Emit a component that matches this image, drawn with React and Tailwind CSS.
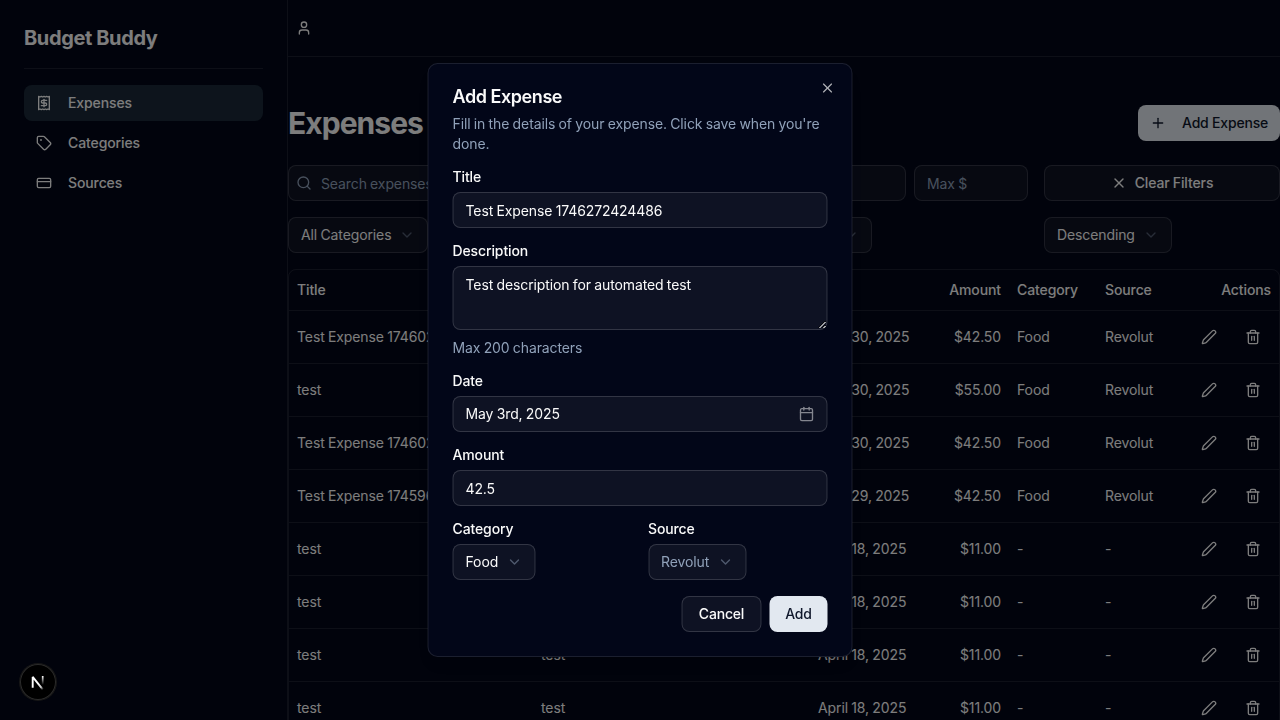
import React from "react";
import {
  Receipt,
  Tag,
  CreditCard,
  User,
  Plus,
  Search,
  X,
  ChevronDown,
  Pen,
  Trash2,
  Calendar,
} from "lucide-react";

const NAV = [
  { label: "Expenses", icon: Receipt, active: true },
  { label: "Categories", icon: Tag },
  { label: "Sources", icon: CreditCard },
];

const EXPENSES = [
  ["Test Expense 1746029841120", "Test expense", "April 30, 2025", "$42.50", "Food", "Revolut"],
  ["test", "test", "April 30, 2025", "$55.00", "Food", "Revolut"],
  ["Test Expense 1746027733410", "Test expense", "April 30, 2025", "$42.50", "Food", "Revolut"],
  ["Test Expense 1745964120873", "Test expense", "April 29, 2025", "$42.50", "Food", "Revolut"],
  ["test", "test", "April 18, 2025", "$11.00", "-", "-"],
  ["test", "test", "April 18, 2025", "$11.00", "-", "-"],
  ["test", "test", "April 18, 2025", "$11.00", "-", "-"],
  ["test", "test", "April 18, 2025", "$11.00", "-", "-"],
];

const TEXT = "text-sm tracking-[-0.11px] [word-spacing:-0.5px]";

const FIELD =
  TEXT +
  " h-9 w-full min-w-0 rounded-[8px] border border-white/15 bg-white/[0.05] px-3 py-1 outline-none placeholder:text-[#90a1b9]";

function Select({ children, muted }) {
  return (
    <button
      className={
        TEXT +
        " flex h-9 w-fit items-center justify-between gap-2 rounded-[8px] border border-white/15 bg-white/[0.05] px-3 py-2 whitespace-nowrap " +
        (muted ? "text-[#90a1b9]" : "")
      }
    >
      {children}
      <ChevronDown className="size-4 text-[#90a1b9] opacity-50" />
    </button>
  );
}

function Sidebar() {
  return (
    <aside className="w-72 shrink-0 border-r border-white/10 p-6">
      <div className="border-b border-white/10 pb-4">
        <h2 className="text-xl leading-7 font-bold tracking-[-0.38px]">Budget Buddy</h2>
      </div>
      <nav className="flex flex-col gap-1 pt-4">
        {NAV.map(({ label, icon: Icon, active }) => (
          <button
            key={label}
            className={
              TEXT +
              " flex h-9 items-center gap-4 rounded-[8px] px-3 font-medium " +
              (active ? "bg-[#1a2938]" : "")
            }
          >
            <Icon className="size-4" />
            {label}
          </button>
        ))}
      </nav>
    </aside>
  );
}

function Filters() {
  return (
    <div className="grid grid-cols-4 gap-4">
      <div className="grid grid-cols-1 grid-rows-1 items-center">
        <input className={FIELD + " col-start-1 row-start-1 pl-8"} placeholder="Search expenses..." />
        <Search className="pointer-events-none col-start-1 row-start-1 ml-2 size-4 text-[#90a1b9]" />
      </div>
      <button className={FIELD + " text-left"}>Pick a date range</button>
      <div className="flex gap-2">
        <input className={FIELD} placeholder="Min $" />
        <input className={FIELD} placeholder="Max $" />
      </div>
      <button
        className={
          TEXT +
          " flex h-9 items-center justify-center gap-2 rounded-[8px] border border-white/15 bg-white/[0.05] font-medium"
        }
      >
        <X className="size-4" />
        Clear Filters
      </button>
      <Select>All Categories</Select>
      <Select>All Sources</Select>
      <Select>Date</Select>
      <Select>Descending</Select>
    </div>
  );
}

function ExpenseTable() {
  return (
    <div className="rounded-[8px] border border-white/10">
      <table className={TEXT + " w-full table-fixed"}>
        <colgroup>
          <col className="w-[244px]" />
          <col className="w-[277px]" />
          <col className="w-[120px]" />
          <col className="w-[79px]" />
          <col className="w-[88px]" />
          <col className="w-[76px]" />
          <col />
        </colgroup>
        <thead>
          <tr className="border-b border-white/10 text-left [&>th]:h-10 [&>th]:px-2 [&>th]:font-medium">
            <th>Title</th>
            <th>Description</th>
            <th>Date</th>
            <th className="text-right">Amount</th>
            <th>Category</th>
            <th>Source</th>
            <th className="text-right">Actions</th>
          </tr>
        </thead>
        <tbody>
          {EXPENSES.map((row, i) => (
            <tr key={i} className="border-b border-white/10 whitespace-nowrap [&>td]:p-2">
              {row.map((cell, j) => (
                <td key={j} className={j === 3 ? "text-right" : ""}>
                  {cell}
                </td>
              ))}
              <td>
                <div className="flex justify-end gap-2">
                  <button className="grid size-9 place-items-center">
                    <Pen className="size-4" />
                  </button>
                  <button className="grid size-9 place-items-center">
                    <Trash2 className="size-4" />
                  </button>
                </div>
              </td>
            </tr>
          ))}
        </tbody>
      </table>
    </div>
  );
}

function Field({ label, children }) {
  return (
    <div className="grid content-start gap-2">
      <label className="text-sm leading-none font-medium tracking-[-0.12px]">{label}</label>
      {children}
    </div>
  );
}

function AddExpenseDialog() {
  return (
    <div
      role="dialog"
      className="fixed top-1/2 left-1/2 grid w-[425px] -translate-x-1/2 -translate-y-1/2 gap-4 rounded-[10px] border border-white/10 bg-[#020618] p-6 shadow-lg"
    >
      <div className="flex flex-col gap-2">
        <h2 className="text-lg leading-none font-semibold tracking-[-0.44px]">Add Expense</h2>
        <p className={TEXT + " text-[#90a1b9]"}>
          Fill in the details of your expense. Click save when you're done.
        </p>
      </div>
      <Field label="Title">
        <input className={FIELD} defaultValue="Test Expense 1746272424486" />
      </Field>
      <Field label="Description">
        <textarea
          className={
            TEXT +
            " block h-16 w-full rounded-[8px] border border-white/15 bg-white/[0.05] px-3 py-2 outline-none"
          }
          defaultValue="Test description for automated test"
        />
        <p className={TEXT + " text-[#90a1b9]"}>Max 200 characters</p>
      </Field>
      <Field label="Date">
        <button className={FIELD + " flex items-center justify-between"}>
          May 3rd, 2025
          <Calendar className="size-4 opacity-50" />
        </button>
      </Field>
      <Field label="Amount">
        <input className={FIELD} defaultValue="42.5" />
      </Field>
      <div className="grid grid-cols-2 gap-4">
        <Field label="Category">
          <Select>Food</Select>
        </Field>
        <Field label="Source">
          <Select muted>Revolut</Select>
        </Field>
      </div>
      <div className="flex justify-end gap-2 text-sm font-medium tracking-[-0.2px]">
        <button className="h-9 w-20 rounded-[8px] border border-white/15 bg-white/[0.05]">Cancel</button>
        <button className="h-9 w-[58px] rounded-[8px] bg-[#e2e8f0] text-[#0f172b]">Add</button>
      </div>
      <button className="absolute top-4 right-4 opacity-70" aria-label="Close">
        <X className="size-4" strokeWidth={1.75} />
      </button>
    </div>
  );
}

function DevBadge() {
  return (
    <div className="fixed bottom-5 left-5 grid size-9 place-items-center rounded-full bg-black shadow-[0_0_0_1px_#171717,inset_0_0_0_1px_#2b2b2b]">
      <svg width="40" height="40" viewBox="0 0 40 40" fill="none" className="-m-0.5">
        <defs>
          <linearGradient id="diag" x1="21.5" y1="20.5" x2="26" y2="27" gradientUnits="userSpaceOnUse">
            <stop stopColor="white" />
            <stop offset="0.6" stopColor="white" stopOpacity="0.8" />
            <stop offset="1" stopColor="white" stopOpacity="0" />
          </linearGradient>
          <linearGradient id="stem" x1="24" y1="14" x2="24" y2="22.8" gradientUnits="userSpaceOnUse">
            <stop stopColor="white" />
            <stop offset="1" stopColor="white" stopOpacity="0" />
          </linearGradient>
        </defs>
        <path d="M14.7 25.8V14.9L25.1 27.8" stroke="url(#diag)" strokeWidth="1.9" strokeLinejoin="bevel" />
        <path d="M24.7 14V23" stroke="url(#stem)" strokeWidth="1.7" />
      </svg>
    </div>
  );
}

export default function App() {
  return (
    <div className="h-screen overflow-hidden bg-[#020618] font-['Inter',sans-serif] text-[#fafafa] antialiased">
      <div className="flex h-screen">
        <Sidebar />
        <div className="flex min-w-0 flex-1 flex-col">
          <header className="flex h-[57px] shrink-0 items-center border-b border-white/10 px-2">
            <User className="size-4" />
          </header>
          <main className="flex flex-col gap-4 pt-12">
            <div className="mb-2 flex items-center justify-between">
              <h1 className="text-3xl font-bold tracking-[-0.95px]">Expenses</h1>
              <button className="flex h-9 items-center gap-4 rounded-[8px] bg-[#e2e8f0] px-3 text-sm font-medium tracking-[-0.2px] text-[#0f172b]">
                <Plus className="size-4" />
                Add Expense
              </button>
            </div>
            <div className="flex flex-col gap-4">
              <Filters />
              <ExpenseTable />
            </div>
          </main>
        </div>
      </div>
      <div className="fixed inset-0 bg-black/50" />
      <AddExpenseDialog />
      <DevBadge />
    </div>
  );
}
